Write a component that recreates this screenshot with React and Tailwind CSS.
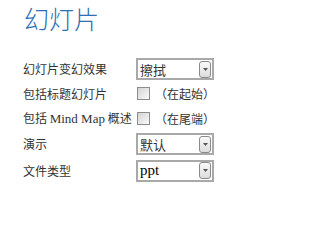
import React from 'react';

const CJK = { fontFamily: '"Noto Sans CJK SC", "Liberation Sans", sans-serif' };

const Select = ({ value, serif }) => (
  <div className="flex h-[22px] w-[78px] items-center justify-between border-2 border-[#a9a9a9] bg-white pl-[2px] pr-[1px]">
    <span
      className={serif ? 'text-[15px] leading-none text-black' : 'text-[13px] leading-none text-[#333]'}
      style={serif ? { fontFamily: '"Liberation Serif", serif' } : CJK}
    >
      {value}
    </span>
    <span className="flex h-[17px] w-[12px] items-center justify-center rounded-[3px] border border-[#8a8a8a] bg-gradient-to-b from-[#fafafa] to-[#dcdcdc]">
      <svg width="5" height="3" viewBox="0 0 5 3">
        <path d="M0 0h5L2.5 3z" fill="#555" />
      </svg>
    </span>
  </div>
);

const Check = ({ note }) => (
  <div className="flex items-center pl-[1px]">
    <span className="h-[13px] w-[13px] border border-[#8c8c8c] bg-gradient-to-br from-[#d4d4d4] to-[#fbfbfb]" />
    <span className="ml-[5px] text-[12px] leading-none text-[#333]" style={CJK}>{note}</span>
  </div>
);

const rows = [
  { label: '幻灯片变幻效果', h: 'h-[24px]', control: <Select value="擦拭" /> },
  { label: '包括标题幻灯片', h: 'h-[25px]', control: <Check note="（在起始）" /> },
  {
    label: (
      <>
        包括 <span className="text-[13px]" style={{ fontFamily: '"Liberation Serif", serif' }}>Mind Map</span> 概述
      </>
    ),
    h: 'h-[25px]',
    control: <Check note="（在尾端）" />,
  },
  { label: '演示', h: 'h-[26px]', control: <Select value="默认" /> },
  { label: '文件类型', h: 'h-[27px]', control: <Select value="ppt" serif /> },
];

export default function App() {
  return (
    <div className="h-[211px] w-[290px] bg-white" style={CJK}>
      <h1 className="pl-[24px] pt-[6px] text-[25px] font-light leading-[25px] text-[#2f6fb5]">幻灯片</h1>
      <div className="mt-[26px] flex flex-col">
        {rows.map((r, i) => (
          <div key={i} className={`flex items-center ${r.h}`}>
            <div className="w-[136px] whitespace-nowrap pl-[23px] text-[12px] leading-none text-[#333]">{r.label}</div>
            {r.control}
          </div>
        ))}
      </div>
    </div>
  );
}
